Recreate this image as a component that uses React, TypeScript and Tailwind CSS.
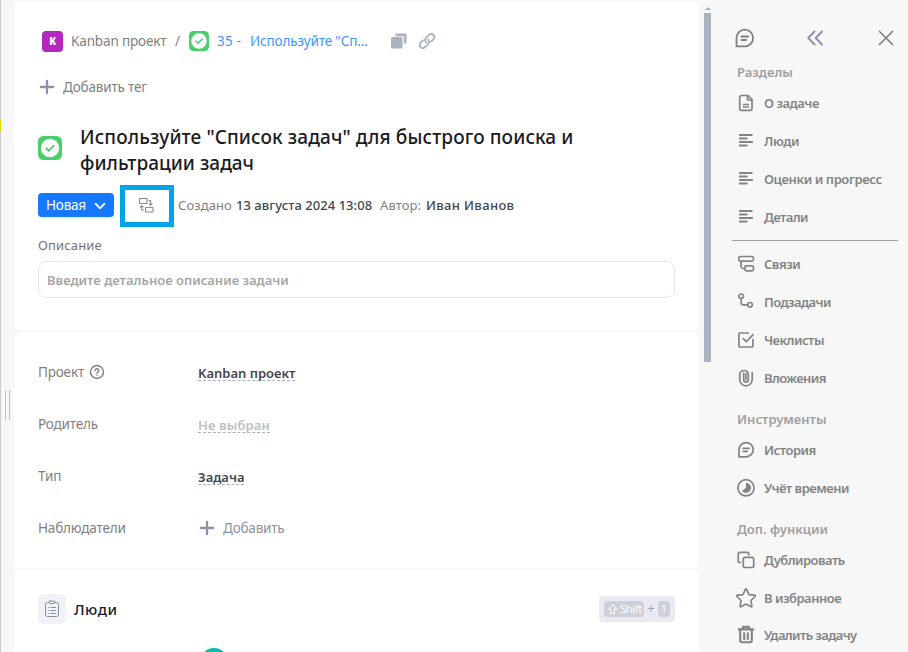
import type { ReactNode } from "react";

type IconProps = { children: ReactNode; size?: number; className?: string; width?: number };

function Icon({ children, size = 20, className = "", width = 1.7 }: IconProps) {
  return (
    <svg
      width={size}
      height={size}
      viewBox={`0 0 ${size} ${size}`}
      fill="none"
      stroke="currentColor"
      strokeWidth={width}
      strokeLinecap="round"
      strokeLinejoin="round"
      className={`shrink-0 ${className}`}
    >
      {children}
    </svg>
  );
}

const icons = {
  doc: (
    <>
      <path d="M5.5 2.500h6.500L16 6.500v9a1.800 1.800 0 0 1-1.800 1.800H5.500a1.800 1.800 0 0 1-1.800-1.800V4.300a1.800 1.800 0 0 1 1.800-1.800z" />
      <path d="M11.500 2.800V7H16M7.500 11.500h5M7.500 14h5" />
    </>
  ),
  lines: <path d="M3.800 4h12M3.800 7.500h7M3.800 11h12.400M3.800 14.500h7" strokeWidth="1.900" />,
  relations: (
    <>
      <rect x="2.800" y="2.500" width="14.700" height="4.600" rx="1.600" />
      <rect x="8.800" y="11.900" width="8.700" height="4.900" rx="1.600" />
      <path d="M5 7.300v4.600a2.600 2.600 0 0 0 2.600 2.600h1" />
    </>
  ),
  subtasks: (
    <>
      <circle cx="5.200" cy="4.200" r="2.200" />
      <circle cx="14" cy="12.800" r="2.300" />
      <path d="M5.200 6.500v4.200a2.100 2.100 0 0 0 2.100 2.100h4.400" />
    </>
  ),
  check: (
    <>
      <path d="M12.300 3H3.900a1 1 0 0 0-1 1v12a1 1 0 0 0 1 1h12a1 1 0 0 0 1-1V9.600" />
      <path d="m7.300 8.700 3 3 6.800-7" />
    </>
  ),
  clip: (
    <path d="M7.700 5.200v6.500a2.300 2.300 0 0 0 4.600 0V6.200a4 4 0 0 0-4.300-3.700 4.200 4.200 0 0 0-4.200 4.100v5a6.200 6.200 0 0 0 12.400 0V4.500M10 5.700v5.900" />
  ),
  bubble: (
    <>
      <path d="M3 16.800V9.700a7.100 7.100 0 1 1 7.100 7.100z" />
      <path d="M7.300 8.400h5.600M7.300 11.300h4" />
    </>
  ),
  clock: (
    <>
      <circle cx="10" cy="9.800" r="8.100" />
      <path d="M10 4.800a5 5 0 1 1-3.900 8.100L10 9.800z" fill="currentColor" stroke="none" />
    </>
  ),
  duplicate: (
    <>
      <rect x="7.300" y="7.300" width="10.400" height="10.200" rx="1.800" />
      <path d="M4.500 12.500H4a1.800 1.800 0 0 1-1.800-1.800V4.200A1.800 1.800 0 0 1 4 2.400h7a1.800 1.800 0 0 1 1.800 1.800v.6" />
    </>
  ),
  star: (
    <path d="M9.200 1.600q.8-1.400 1.600 0l2.200 5 5.400.6q1.600.3.500 1.500l-4 3.800 1 5.300q.1 1.500-1.300.8L10 16l-4.600 2.600q-1.400.7-1.300-.8l1-5.300-4-3.800q-1.100-1.200.5-1.500L7 6.600z" />
  ),
  trash: (
    <path
      d="M2.700 4.400h14.600M7 4.200V1.900h6v2.300M4.200 5v10.700a1.600 1.600 0 0 0 1.600 1.600h8.400a1.600 1.600 0 0 0 1.600-1.600V5M8.200 8.200v6M11.800 8.200v6"
      strokeWidth="2.100"
    />
  ),
};

function NavItem({ icon, label, track }: { icon: keyof typeof icons; label: string; track: string }) {
  return (
    <div className="flex h-[38px] shrink-0 items-center pl-[2px] text-[#848484]">
      <Icon>{icons[icon]}</Icon>
      <span className={`mt-[2px] ml-2 text-[13px] font-semibold whitespace-nowrap ${track}`}>{label}</span>
    </div>
  );
}

function NavTitle({ children, className = "" }: { children: ReactNode; className?: string }) {
  return (
    <div className={`flex h-6 shrink-0 items-center pt-[2px] pl-[3px] text-[13px] font-semibold text-[#a0a0a0] ${className}`}>
      {children}
    </div>
  );
}

function TaskBadge({ size }: { size: number }) {
  return (
    <svg width={size} height={size} viewBox="0 0 24 24" fill="none" className="shrink-0">
      <rect width="24" height="24" rx="5.500" fill="#48cf6c" />
      <circle cx="12" cy="12" r="9.200" fill="#fff" />
      <path d="m8.200 12.200 2.600 2.600 5-5.200" stroke="#48cf6c" strokeWidth="1.800" strokeLinecap="round" strokeLinejoin="round" />
    </svg>
  );
}

function Plus() {
  return (
    <svg width="16" height="16" viewBox="0 0 16 16" className="shrink-0" stroke="#8c92ab" strokeWidth="2.300" strokeLinecap="round">
      <path d="M8 1.800v12.400M1.800 8h12.400" />
    </svg>
  );
}

function Field({ label, children, help }: { label: string; children: ReactNode; help?: boolean }) {
  return (
    <div className="flex h-[52px] items-center">
      <div className="flex w-40 shrink-0 items-center text-[13.5px] tracking-[-0.17px] text-[#808080]">
        <span>{label}</span>
        {help && (
          <Icon size={16} width={1.4} className="ml-[5px]">
            <circle cx="8" cy="8" r="6.500" />
            <path d="M6.200 6.400a1.800 1.800 0 1 1 2.600 1.700c-.6.3-.8.6-.8 1.100M8 11.300v.1" />
          </Icon>
        )}
      </div>
      {children}
    </div>
  );
}

function Value({ children, muted }: { children: ReactNode; muted?: boolean }) {
  return (
    <span
      className={`mt-[2px] border-b border-dashed border-[#a9b0c3] pt-px text-[13px] leading-[14px] font-semibold ${muted ? "tracking-[0.1px] text-[#bfbfbf]" : "text-[#45474d]"}`}
    >
      {children}
    </span>
  );
}

export default function App() {
  return (
    <div className="flex h-[652px] w-[908px] overflow-hidden bg-[#f7f7f7] font-['Noto_Sans','Open_Sans',sans-serif]">
      <div className="relative w-[14px] shrink-0 border-l border-[#cbcbcb]">
        <div className="absolute top-[120px] -left-px h-3 w-px bg-[#e6d800]" />
        <div className="absolute top-[390px] left-1 h-[30px] w-[5px] border-x border-[#bdbdbd]" />
      </div>

      <main className="flex w-[685px] shrink-0 flex-col gap-[2px] pt-[2px]">
        <section className="h-[328px] shrink-0 rounded-[5px] bg-white pl-6">
          <div className="flex h-[78px] items-center pl-1 text-[13.5px] tracking-[-0.15px]">
            <div className="flex size-[21px] items-center justify-center rounded-[4px] bg-[#b527bd] font-['Open_Sans'] text-[10px] font-extrabold text-white">
              K
            </div>
            <span className="ml-2 w-[104px] whitespace-nowrap text-[#808080]">Kanban проект</span>
            <span className="w-[14px] text-[#808080]">/</span>
            <TaskBadge size={20} />
            <span className="ml-2 w-[33px] whitespace-nowrap tracking-[0.2px] text-[#4096ff]">35 -</span>
            <span className="w-[141px] whitespace-nowrap text-[#4096ff]">Используйте "Сп...</span>
            <svg width="16" height="16" viewBox="0 0 16 16" className="shrink-0" fill="#abb2bf">
              <rect y="4" width="11.500" height="11.500" rx="1.500" />
              <path d="M4.500.500h9.700A1.300 1.300 0 0 1 15.500 1.800v8.700h-2.700V3.200H4.500z" />
            </svg>
            <Icon size={18} width={1.9} className="ml-[11px] text-[#abb2bf]">
              <path d="M8 10.300a3.100 3.100 0 0 1 0-4.400l3-3a3.100 3.100 0 0 1 4.400 4.400l-2.400 2.400M10 7.700a3.100 3.100 0 0 1 0 4.400l-3 3a3.100 3.100 0 0 1-4.400-4.400L5 8.300" />
            </Icon>
          </div>
          <div className="-mt-px flex h-4 items-center pl-px text-[13.5px] tracking-[-0.17px] text-[#808080]">
            <Plus />
            <span className="ml-2">Добавить тег</span>
          </div>
          <div className="mt-[29px] flex h-[52px]">
            <div className="mt-3 w-[42px]">
              <TaskBadge size={24} />
            </div>
            <h1 className="text-[19px] leading-[26px] font-medium tracking-[0.11px] whitespace-nowrap text-[#1b1b1f]">
              Используйте "Список задач" для быстрого поиска и
              <br />
              <span className="tracking-normal">фильтрации задач</span>
            </h1>
          </div>
          <div className="mt-[9px] flex h-[42px] items-center text-[13.5px] whitespace-nowrap">
            <button className="-mt-[2px] flex h-6 w-[76px] items-center rounded-[4px] bg-[#1677ff] pl-2 tracking-[-0.2px] text-white shadow-[0_2px_0_#e6f4ff]">
              Новая
              <Icon size={12} width={1.8} className="mt-[2px] ml-[8px]">
                <path d="m1.500 3.700 4.500 4.600 4.500-4.600" />
              </Icon>
            </button>
            <div className="ml-[6px] flex h-[42px] w-[54px] items-center justify-center border-[5px] border-[#00a2e8]">
              <Icon size={16} width={1.1} className="-mt-[2px] -ml-[3px] text-[#8c8c8c]">
                <path d="M1.500 1.500h7.500v5h-7.500zM7.500 10.500h7.500v4.500h-7.500zM11 3.500h1.700v4.500M11.300 6.800l1.400 1.400 1.400-1.400M5.500 13H3.700V8.800M2.300 10l1.400-1.400L5.100 10" />
              </Icon>
            </div>
            <span className="ml-1 w-[58px] text-[13px] tracking-[0.1px] text-[#808080]">Создано</span>
            <span className="w-[144px] text-[13px] font-medium tracking-[0.04px] text-[#45474d]">13 августа 2024 13:08</span>
            <span className="w-[46px] text-[13px] tracking-[0.1px] text-[#808080]">Автор:</span>
            <span className="text-[13px] font-medium tracking-[0.35px] text-[#45474d]">Иван Иванов</span>
          </div>
          <div className="mt-2 h-5 text-[13px] leading-5 tracking-[0.15px] text-[#727272]">Описание</div>
          <div className="mt-[6px] flex h-[37px] w-[637px] items-center rounded-lg border border-[#e6e8f0] pt-[2px] pl-2 text-[13px] font-semibold text-[#a6a6a6]">
            Введите детальное описание задачи
          </div>
        </section>

        <section className="h-[236px] shrink-0 rounded-[5px] bg-white pt-[14px] pl-6">
          <Field label="Проект" help>
            <Value>Kanban проект</Value>
          </Field>
          <Field label="Родитель">
            <Value muted>Не выбран</Value>
          </Field>
          <Field label="Тип">
            <Value>Задача</Value>
          </Field>
          <Field label="Наблюдатели">
            <div className="flex items-center gap-2 pl-px text-[13.5px] tracking-[-0.2px] text-[#8c92a0]">
              <Plus />
              Добавить
            </div>
          </Field>
        </section>

        <section className="h-[100px] shrink-0 overflow-hidden rounded-t-[5px] bg-white pr-6 pl-6">
          <div className="flex h-[78px] items-center">
            <div className="flex h-[30px] w-7 items-center justify-center rounded-[5px] bg-[#f0f2f7] text-[#87919d]">
              <Icon size={18} width={1}>
                <path d="M6 2.500H4.500a2 2 0 0 0-2 2v10a2 2 0 0 0 2 2h9a2 2 0 0 0 2-2v-10a2 2 0 0 0-2-2H12" />
                <rect x="6" y="1" width="6" height="2.500" rx="1.200" />
                <path d="M8 7.500h4.500M8 10.500h4.500M8 13.500h4.500M5.500 7.500h.5M5.500 10.500h.5M5.500 13.500h.5" />
              </Icon>
            </div>
            <h2 className="ml-2 text-[15px] font-medium tracking-[0.5px] text-[#1b1b1f]">Люди</h2>
            <div className="ml-auto flex h-[26px] w-[76px] items-center rounded-[4px] bg-[#e8ebf3] pl-[5px] text-[11px] text-white">
              <span className="flex h-4 w-10 items-center rounded-[4px] bg-[#cdd0d9] pl-[3px] tracking-[-0.3px]">
                <Icon size={11} width={1} className="mr-[2px]">
                  <path d="M5.500 1 1.500 5h2v4.500h4V5h2z" />
                </Icon>
                Shift
              </span>
              <span className="w-[14px] text-center text-[13px] text-[#a3a6ad]">+</span>
              <span className="flex h-4 w-3 items-center justify-center rounded-[4px] bg-[#cdd0d9]">1</span>
            </div>
          </div>
          <div className="ml-[162px] size-7 rounded-full bg-[#05bfad]" />
        </section>
      </main>

      <div className="ml-[5px] flex w-[7px] shrink-0 flex-col items-center pt-[7px]">
        <div className="h-[3px] w-0 border-x-[3px] border-b-[3px] border-x-transparent border-b-[#a9b1c0]" />
        <div className="mt-[3px] h-[349px] w-[7px] bg-[#abb2c0]" />
      </div>

      <aside className="flex w-[197px] flex-col pt-[19px] pl-[23px] text-[#808080]">
        <div className="flex h-[38px] shrink-0 items-center">
          <Icon size={22} width={1.8}>
            <path d="M2.500 19.300V11a8.300 8.300 0 1 1 8.300 8.300zM7.500 9.500h6.800M7.500 13h4.600" />
          </Icon>
          <Icon size={18} width={2} className="-mt-px ml-[50px] text-[#8c92ab]">
            <path d="M8.500 2.500 2.200 9l6.300 6.500M16 2.500 9.700 9l6.300 6.500" />
          </Icon>
          <Icon size={16} width={1.7} className="ml-[54px]">
            <path d="m1.500 1.500 13 13M14.500 1.500l-13 13" />
          </Icon>
        </div>
        <NavTitle className="mt-[3px]">Разделы</NavTitle>
        <NavItem icon="doc" label="О задаче" track="tracking-[-0.48px]" />
        <NavItem icon="lines" label="Люди" track="tracking-[-0.35px]" />
        <NavItem icon="lines" label="Оценки и прогресс" track="tracking-[-0.4px]" />
        <NavItem icon="lines" label="Детали" track="tracking-[-0.6px]" />
        <div className="my-1 -ml-[2px] h-px w-[166px] shrink-0 bg-[#a0a0a0]" />
        <NavItem icon="relations" label="Связи" track="tracking-[-0.5px]" />
        <NavItem icon="subtasks" label="Подзадачи" track="tracking-[-0.57px]" />
        <NavItem icon="check" label="Чеклисты" track="tracking-[-0.52px]" />
        <NavItem icon="clip" label="Вложения" track="tracking-[-0.6px]" />
        <NavTitle className="mt-[10px]">Инструменты</NavTitle>
        <NavItem icon="bubble" label="История" track="tracking-[-0.5px]" />
        <NavItem icon="clock" label="Учёт времени" track="tracking-[-0.5px]" />
        <NavTitle className="mt-[10px]">Доп. функции</NavTitle>
        <NavItem icon="duplicate" label="Дублировать" track="tracking-[-0.55px]" />
        <NavItem icon="star" label="В избранное" track="tracking-[-0.5px]" />
        <div className="-mt-px">
          <NavItem icon="trash" label="Удалить задачу" track="tracking-[-0.62px]" />
        </div>
      </aside>
    </div>
  );
}
